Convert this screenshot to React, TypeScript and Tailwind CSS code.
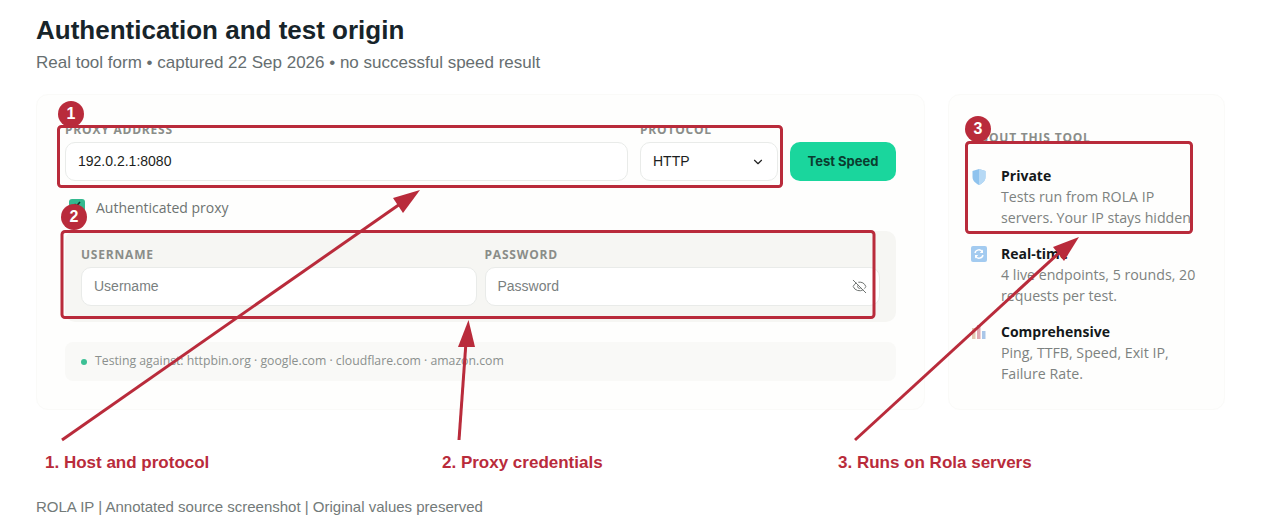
import { ChevronDown, EyeOff } from "lucide-react";

const RED = "#b92b3b";

function Label({ children }: { children: string }) {
  return (
    <div className="font-['Open_Sans',sans-serif] text-[12px] leading-[16px] font-bold tracking-[0.8px] text-[#8a8d89] uppercase mb-[4px]">
      {children}
    </div>
  );
}

function Field({ children, className }: { children: React.ReactNode; className: string }) {
  return (
    <div className={"h-[39px] bg-white border border-[#e9ebe9] rounded-[10px] flex items-center font-['Liberation_Sans',sans-serif] text-[14px] " + className}>
      {children}
    </div>
  );
}

function Item({ icon, title, lines }: { icon: React.ReactNode; title: string; lines: string[] }) {
  return (
    <div className="flex">
      <div className="w-[30px] pt-[3px] shrink-0">{icon}</div>
      <div className="font-['Open_Sans',sans-serif] text-[14px] leading-[21px]">
        <div className="font-bold text-[#14181a]">{title}</div>
        {lines.map((l) => (
          <div key={l} className="text-[14.2px] text-[#7d8280] whitespace-nowrap">{l}</div>
        ))}
      </div>
    </div>
  );
}

function Badge({ n, className }: { n: number; className: string }) {
  return (
    <div className={"absolute w-[26px] h-[26px] rounded-full bg-[#b92b3b] text-white flex items-center justify-center font-['Liberation_Sans',sans-serif] font-bold text-[16px] " + className}>
      {n}
    </div>
  );
}

export default function App() {
  return (
    <div className="relative w-[1262px] h-[530px] overflow-hidden bg-white pl-[36px] pt-[13px] font-['Liberation_Sans',sans-serif]">
      <h1 className="text-[26px] leading-[34px] font-bold text-[#17242a]">Authentication and test origin</h1>
      <p className="text-[17px] leading-[20px] mt-[6px] text-[#666e70]">Real tool form • captured 22 Sep 2026 • no successful speed result</p>

      <div className="flex gap-[23px] mt-[21px] w-[1189px]">
        <div className="w-[889px] h-[316px] bg-[#fefefd] rounded-[12px] border border-[#fafaf8] pl-[28px] pr-[28px] pt-[27px]">
          <div className="flex gap-[12px] items-end">
            <div className="w-[563px]">
              <Label>Proxy address</Label>
              <Field className="pl-[12px] text-[#1c1e20]">192.0.2.1:8080</Field>
            </div>
            <div className="w-[138px]">
              <Label>Protocol</Label>
              <Field className="pl-[12px] pr-[12px] justify-between text-[#1c1e20]">
                HTTP
                <ChevronDown size={14} strokeWidth={2} className="text-[#222]" />
              </Field>
            </div>
            <button className="w-[106px] h-[39px] bg-[#1ad69d] rounded-[10px] font-['Inter',sans-serif] font-bold text-[13px] text-[#0b3d30]">
              Test Speed
            </button>
          </div>

          <div className="flex items-center mt-[16px] h-[20px]">
            <div className="w-[16px] h-[16px] ml-[4px] rounded-[3px] bg-[#34b98f] flex items-start justify-center">
              <svg width="10" height="10" viewBox="0 0 10 10"><path d="M2.5 5 L4.5 7 L8 3" stroke="#12352b" strokeWidth="1.6" fill="none" /></svg>
            </div>
            <span className="ml-[11px] font-['Open_Sans',sans-serif] text-[14px] text-[#6d7371]">Authenticated proxy</span>
          </div>

          <div className="mt-[14px] h-[91px] bg-[#f6f6f3] rounded-[10px] pl-[16px] pr-[16px] pt-[16px] flex gap-[8px]">
            <div className="flex-1">
              <Label>Username</Label>
              <Field className="pl-[12px] text-[#7a7f7f]">Username</Field>
            </div>
            <div className="flex-1">
              <Label>Password</Label>
              <Field className="pl-[12px] pr-[12px] justify-between text-[#7a7f7f]">
                Password
                <EyeOff size={15} strokeWidth={1.6} className="text-[#6f7472]" />
              </Field>
            </div>
          </div>

          <div className="mt-[20px] h-[39px] bg-[#f9f9f7] rounded-[8px] flex items-center pl-[16px] font-['Open_Sans',sans-serif] text-[12.25px] text-[#8b908e]">
            <span className="w-[6px] h-[6px] rounded-full bg-[#3cc095] mr-[8px]" />
            Testing against: httpbin.org · google.com · cloudflare.com · amazon.com
          </div>
        </div>

        <div className="w-[277px] h-[316px] bg-[#fefefd] rounded-[12px] border border-[#fafaf8] pl-[22px] pt-[35px]">
          <div className="font-['Open_Sans',sans-serif] text-[12px] leading-[16px] font-bold tracking-[0.8px] text-[#8a8d89] uppercase">About this tool</div>
          <div className="flex flex-col gap-[15px] mt-[19px]">
            <Item
              title="Private"
              lines={["Tests run from ROLA IP", "servers. Your IP stays hidden"]}
              icon={
                <svg width="16" height="18" viewBox="0 0 16 18">
                  <path d="M8 1 L14.5 3 V9 C14.5 13 11 15.5 8 17 C5 15.5 1.5 13 1.5 9 V3 Z" fill="#8fc3ee" />
                  <path d="M8 1 L14.5 3 V9 C14.5 13 11 15.5 8 17 Z" fill="#b6d9f5" />
                </svg>
              }
            />
            <Item
              title="Real-time"
              lines={["4 live endpoints, 5 rounds, 20", "requests per test."]}
              icon={
                <svg width="16" height="16" viewBox="0 0 16 16">
                  <rect width="16" height="16" rx="2" fill="#a3cbf0" />
                  <path d="M4 7 A4 4 0 0 1 11.5 6 M12 9 A4 4 0 0 1 4.5 10" stroke="#fff" strokeWidth="1.4" fill="none" />
                  <path d="M12 3.5 V7 H8.8 Z M4 12.5 V9 H7.2 Z" fill="#fff" />
                </svg>
              }
            />
            <Item
              title="Comprehensive"
              lines={["Ping, TTFB, Speed, Exit IP,", "Failure Rate."]}
              icon={
                <svg width="16" height="16" viewBox="0 0 16 16">
                  <rect x="1" y="4" width="3.5" height="11" fill="#e3c9b4" />
                  <rect x="6" y="1" width="3.5" height="14" fill="#e0a9b2" />
                  <rect x="11" y="7" width="3.5" height="8" fill="#a9c6e8" />
                </svg>
              }
            />
          </div>
        </div>
      </div>

      <div className="flex mt-[42px] text-[17px] leading-[22px] font-bold text-[#b92b3b]">
        <div className="ml-[9px] w-[397px]">1. Host and protocol</div>
        <div className="w-[396px]">2. Proxy credentials</div>
        <div>3. Runs on Rola servers</div>
      </div>
      <div className="mt-[24px] text-[15px] leading-[18px] text-[#737a79]">ROLA IP | Annotated source screenshot | Original values preserved</div>

      <svg className="absolute left-0 top-0 pointer-events-none" width="1262" height="530" viewBox="0 0 1262 530">
        <g fill="none" stroke={RED} strokeWidth="3">
          <rect x="58.5" y="126.5" width="723" height="60" rx="3" />
          <rect x="62" y="231.5" width="812" height="86" rx="3" />
          <rect x="966.5" y="142.5" width="225" height="90" rx="3" />
          <path d="M62 440 L400 204" />
          <path d="M459 440 L466 342" />
          <path d="M855 440 L1060 252" />
        </g>
        <g fill={RED}>
          <path d="M420 190 L393 198 L403 213 Z" />
          <path d="M468.5 320 L458 347 L475 347 Z" />
          <path d="M1079 237 L1053 247 L1064 261 Z" />
        </g>
      </svg>
      <Badge n={1} className="left-[58px] top-[101px]" />
      <Badge n={2} className="left-[61px] top-[204px]" />
      <Badge n={3} className="left-[965px] top-[116px]" />
    </div>
  );
}
